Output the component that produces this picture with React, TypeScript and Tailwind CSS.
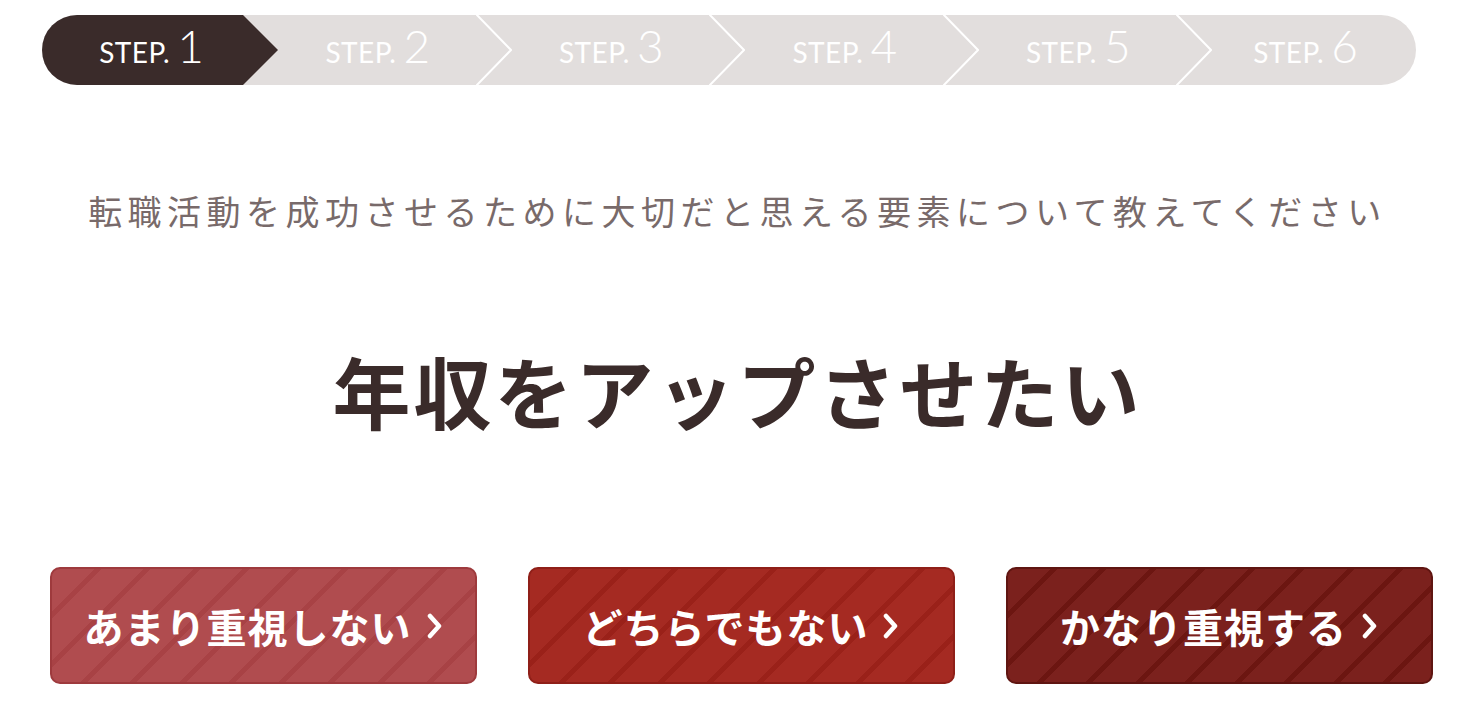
import React from "react"

const steps = [1, 2, 3, 4, 5, 6]

const answers = [
  {
    label: "あまり重視しない",
    cls: "border-[#9e3a3d] bg-[repeating-linear-gradient(135deg,#b04c4f_0px,#b04c4f_30px,#a84245_30px,#a84245_35px)]",
  },
  {
    label: "どちらでもない",
    cls: "border-[#8f1f18] bg-[repeating-linear-gradient(135deg,#a52a22_0px,#a52a22_30px,#9a2119_30px,#9a2119_35px)]",
  },
  {
    label: "かなり重視する",
    cls: "border-[#5f1511] bg-[repeating-linear-gradient(135deg,#7b211d_0px,#7b211d_30px,#6c1611_30px,#6c1611_35px)]",
  },
]

function StepLabel({ n }: { n: number }) {
  return (
    <div className="relative z-10 -mt-[4px] flex items-baseline justify-center text-white font-['Lato',sans-serif]">
      <span className="text-[28px] tracking-[0.5px]">STEP.</span>
      <span className="ml-[7px] text-[46px] font-light leading-none">{n}</span>
    </div>
  )
}

function Chevron() {
  return (
    <svg className="absolute top-0 -right-[17px] z-10 h-[70px] w-[36px]" viewBox="0 0 36 70">
      <polyline points="0,-1 35,35 0,71" fill="none" stroke="#ffffff" strokeWidth="2" />
    </svg>
  )
}

function StepBar() {
  return (
    <div className="ml-[42px] mt-[15px] flex h-[70px] w-[1374px] overflow-hidden rounded-full bg-[#e2dedd]">
      {steps.map((n, i) => {
        const width = i === 0 ? "w-[219px]" : i === 5 ? "w-[221px]" : "flex-1"
        return (
          <div key={n} className={`relative flex h-full items-center justify-center ${width}`}>
            {i === 0 && (
              <div className="absolute left-0 top-0 z-10 h-full w-[236px] bg-[#3a2b2a] [clip-path:polygon(0_0,201px_0,100%_50%,201px_100%,0_100%)]" />
            )}
            <StepLabel n={n} />
            {i > 0 && i < 5 && <Chevron />}
          </div>
        )
      })}
    </div>
  )
}

export default function App() {
  return (
    <div className="min-h-[701px] w-[1475px] bg-white font-['Noto_Sans_CJK_JP','Noto_Sans',sans-serif]">
      <StepBar />

      <p className="mt-[102px] text-center text-[34px] leading-[48px] tracking-[5.5px] text-[#786a6a]">
        転職活動を成功させるために大切だと思える要素について教えてください
      </p>

      <h1 className="mt-[109px] text-center text-[78px] font-bold leading-[92px] tracking-[3px] text-[#3a2b2a]">
        年収をアップさせたい
      </h1>

      <div className="ml-[50px] mt-[131px] flex gap-[51px]">
        {answers.map((a) => (
          <button
            key={a.label}
            className={`flex h-[117px] w-[427px] items-center justify-center rounded-[10px] border-2 text-white ${a.cls}`}
          >
            <span className="text-[40px] font-bold tracking-[1px]">{a.label}</span>
            <svg className="ml-[14px] h-[26px] w-[18px]" viewBox="0 0 18 26">
              <polyline points="4,3 13,13 4,23" fill="none" stroke="#ffffff" strokeWidth="4.5" strokeLinecap="round" strokeLinejoin="round" />
            </svg>
          </button>
        ))}
      </div>
    </div>
  )
}
